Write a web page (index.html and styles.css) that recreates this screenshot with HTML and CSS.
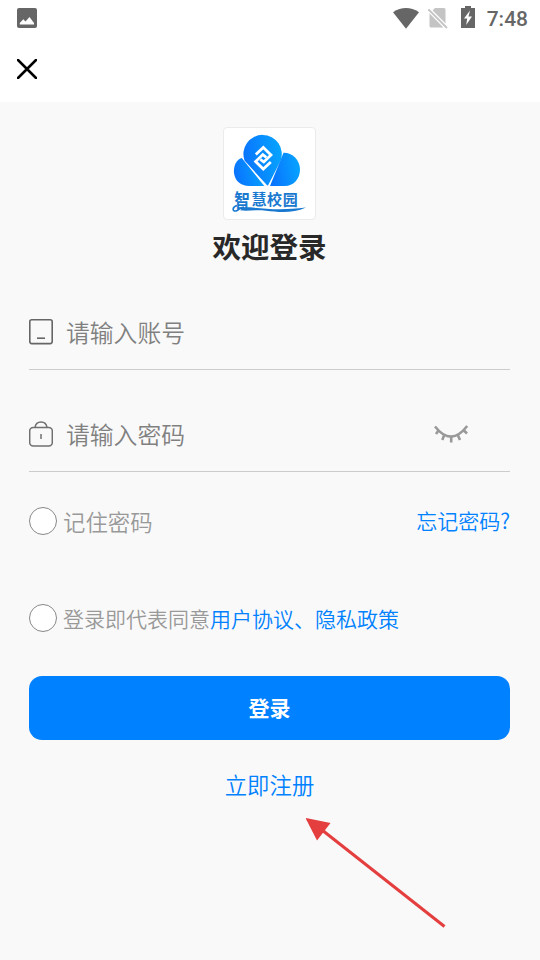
FILE: index.html
```
<!DOCTYPE html>
<html lang="zh-CN">
<head>
  <meta charset="utf-8">
  <meta name="viewport" content="width=device-width, initial-scale=1">
  <title>欢迎登录</title>
  <link rel="stylesheet" href="styles.css">
</head>
<body>
  <div class="status-bar">
    <svg class="status-image" width="20" height="20" viewBox="0 0 20 20">
      <rect width="20" height="20" rx="2" fill="#666"/>
      <path d="M2.800 16.500V15l3.500-3.800L8.500 13.500l4-4.500L17 15v1.500z" fill="#fff"/>
    </svg>
    <div class="status-icons">
      <svg width="26" height="21" viewBox="0 0 26 21">
        <path d="M0 4.200Q13-4.200 26 4.200L13 20.700z" fill="#666"/>
      </svg>
      <svg width="20" height="21" viewBox="0 0 20 21">
        <path d="M7 0H16q1.500 0 1.500 1.500V15.500L4.500 2.500zM1.500 5L15.500 19.500H3q-1.500 0-1.500-1.500z" fill="#c4c4c4"/>
        <path d="M.5 1.500l18.500 18.500" stroke="#fff" stroke-width="4"/>
        <path d="M.5 1.500l18.500 18.500" stroke="#c4c4c4" stroke-width="1.800"/>
      </svg>
      <svg class="battery" width="14" height="22" viewBox="0 0 14 22">
        <path d="M4 0h6v2h4v20H0V2h4z" fill="#666"/>
        <path d="M9 4.500L3 12.500h3.200l-1 6.500L11 10.500H7.500z" fill="#fff"/>
      </svg>
      <span class="clock">7:48</span>
    </div>
  </div>

  <div class="nav-bar">
    <svg width="20" height="20" viewBox="0 0 20 20">
      <path d="M1 1l18 18M19 1L1 19" stroke="#000" stroke-width="2.500" stroke-linecap="round"/>
    </svg>
  </div>

  <main class="login">
    <div class="logo">
      <svg width="91" height="91" viewBox="1 1 91 91">
        <defs>
          <linearGradient id="cloud" x1="0" y1=".6" x2="1" y2=".4">
            <stop offset="0" stop-color="#0a72ff"/>
            <stop offset="1" stop-color="#06a4ff"/>
          </linearGradient>
        </defs>
        <path fill="url(#cloud)" d="M18.800 31C12.500 33 10.500 40 11 46C12 54 18 59 26 59H41.300z"/>
        <path fill="url(#cloud)" d="M44.300 58.500L21.500 33.500A19.200 19.200 0 1 1 57.500 34L45 58.500z"/>
        <path fill="url(#cloud)" d="M47 59L60.500 25.800C69 25.500 77 33 77 42.500C77 52.500 70 59 62 59z"/>
        <g fill="none" stroke="#fff" stroke-width="2.800">
          <path d="M32.800 27.500L40.300 20.500L48 28L40.800 35L37.300 32.300"/>
          <path d="M47.800 35.100L40.300 42.100L32.600 34.600L39.800 27.600L43.300 30.300"/>
        </g>
        <text class="logo-text" transform="translate(11.200 80.500) scale(.98 1.200)" font-size="16">智</text>
        <text class="logo-text" x="28.500" y="77.500" font-size="15">慧</text>
        <text class="logo-text" x="44" y="77.500" font-size="15">校</text>
        <text class="logo-text" x="59.800" y="77.500" font-size="15">园</text>
        <path d="M17 83.200C20 80.500 22 80 27 80.300C43 82 60 83.500 83 80.500C69 87 55 85 43 83.800C32 82.500 24 84.500 17 83.200" fill="#1978cf"/>
        <path d="M14 78.500C9 80 9 84.700 13 84C16 83.300 16 80.500 21 80" fill="none" stroke="#1978cf" stroke-width="1.600"/>
      </svg>
    </div>
    <h1>欢迎登录</h1>

    <label class="field">
      <svg width="24" height="26" viewBox="0 0 24 26" fill="none" stroke="#666" stroke-width="1.600">
        <rect x=".8" y=".8" width="22.400" height="23.800" rx="2"/>
        <path d="M8 19.200h8"/>
      </svg>
      <input type="text" placeholder="请输入账号">
    </label>

    <label class="field">
      <svg width="24" height="26" viewBox="0 0 24 26" fill="none" stroke="#707070" stroke-width="1.500">
        <rect x=".7" y="6.500" width="22.600" height="18.500" rx="3.500"/>
        <path d="M6 6.500C7-1 17-1 18 6.500M12 13v5"/>
      </svg>
      <input type="password" placeholder="请输入密码">
      <svg class="eye" width="34" height="18" viewBox="0 0 34 18" fill="none" stroke="#999" stroke-width="2.600">
        <path d="M1 1.500Q17 22 33.200 1M4.500 5.500L2 9M10 10.500L8.300 15M17.200 12v5.500M24 10.500L26 15M30 5.500L33 8.500"/>
      </svg>
    </label>

    <div class="options">
      <label class="check remember">
        <input type="checkbox"><span>记住密码</span>
      </label>
      <a class="forgot">忘记密码?</a>
    </div>

    <label class="check agreement">
      <input type="checkbox"><span>登录即代表同意<a>用户协议、隐私政策</a></span>
    </label>

    <button class="submit">登录</button>
    <a class="register">立即注册</a>
  </main>

  <svg class="pointer" width="142" height="111" viewBox="0 0 142 111">
    <path d="M16 12L138.500 108.500" stroke="#e43e3e" stroke-width="3"/>
    <path d="M-.5 0L24.500 5L11 22.500z" fill="#e43e3e"/>
  </svg>
</body>
</html>
```
FILE: styles.css
```
* {
  box-sizing: border-box;
}

body {
  margin: 0;
  height: 960px;
  display: flex;
  flex-direction: column;
  overflow: hidden;
  font-family: "Noto Sans CJK SC", sans-serif;
  font-weight: 350;
  background: #f9f9f9;
}

a {
  color: #0081ff;
}

svg {
  display: block;
  flex-shrink: 0;
}

.status-bar {
  display: flex;
  justify-content: space-between;
  height: 36px;
  padding: 0 12px 0 17px;
  background: #fff;
}

.status-image {
  margin-top: 8px;
}

.status-icons {
  display: flex;
  align-items: center;
  gap: 9px;
}

.battery {
  margin: 0 3px 2px 4px;
}

.clock {
  font: 500 21px/36px Roboto, sans-serif;
  color: #666;
  padding-top: 2px;
}

.nav-bar {
  height: 66px;
  padding: 23px 17px;
  background: #fff;
}

.login {
  flex: 1;
  display: flex;
  flex-direction: column;
  padding: 25px 30px 0 29px;
}

.logo {
  align-self: center;
  width: 93px;
  height: 93px;
  border: 1px solid #ebebeb;
  border-radius: 4px;
  background: #fff;
  overflow: hidden;
}

.logo-text {
  font-family: "Noto Sans CJK SC", sans-serif;
  font-weight: 700;
  fill: #1978cf;
}

h1 {
  margin: 5px 0 0;
  font-size: 28.5px;
  line-height: 42px;
  font-weight: 700;
  text-align: center;
  color: #282828;
}

.field {
  display: flex;
  align-items: center;
  height: 76px;
  margin-top: 26px;
  border-bottom: 1px solid #ccc;
}

h1 + .field {
  margin-top: 27px;
}

.field input {
  flex: 1;
  min-width: 0;
  margin-left: 13px;
  padding: 0;
  border: 0;
  outline: none;
  background: none;
  font-family: inherit;
  font-size: 23.8px;
  font-weight: inherit;
  line-height: 36px;
}

.field input::placeholder {
  color: #808080;
}

.eye {
  margin-right: 42px;
}

.options {
  display: flex;
  justify-content: space-between;
  align-items: center;
  height: 34px;
  margin-top: 32px;
}

.check {
  display: flex;
  align-items: center;
  gap: 6px;
  font-size: 21px;
  line-height: 32px;
  color: #999;
}

.check input {
  appearance: none;
  flex-shrink: 0;
  width: 28px;
  height: 28px;
  margin: 0;
  border: 1px solid #888;
  border-radius: 50%;
  background: #fff;
}

.remember {
  font-size: 22.4px;
}

.remember span {
  padding-bottom: 1px;
}

.forgot {
  padding-bottom: 2px;
  font-size: 21px;
  line-height: 32px;
}

.agreement {
  height: 34px;
  margin-top: 63px;
}

.submit {
  height: 64px;
  margin-top: 41px;
  padding: 0 0 3px;
  border: 0;
  border-radius: 13px;
  background: #0081ff;
  color: #fff;
  font-family: inherit;
  font-size: 21px;
  font-weight: 700;
}

.register {
  margin-top: 27px;
  font-size: 22.4px;
  line-height: 34px;
  text-align: center;
}

/* arrow lies over the page, pointing at the register link */
.pointer {
  position: absolute;
  left: 306px;
  top: 818px;
}
```
